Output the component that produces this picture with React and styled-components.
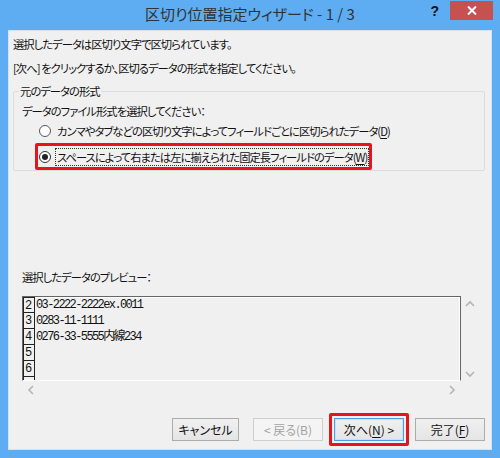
import React from 'react';
import styled, { createGlobalStyle } from 'styled-components';

const GlobalStyle = createGlobalStyle`
  html, body { margin: 0; padding: 0; background: #fff; }
  body {
    font-family: "Noto Sans CJK JP", sans-serif;
    font-feature-settings: "palt";
    color: #111;
  }
`;

const Window = styled.div`
  width: 500px;
  height: 458px;
  box-sizing: border-box;
  background: #5eadf2;
  padding: 0 8px 8px;
  display: flex;
  flex-direction: column;
`;

const TitleBar = styled.div`
  height: 30px;
  flex: none;
  display: grid;
  grid-template-columns: 1fr auto 1fr;
`;

const Title = styled.div`
  grid-column: 2;
  padding-top: 4px;
  line-height: 20px;
  font-size: 15px;
  color: #333;
  white-space: nowrap;
`;

const Controls = styled.div`
  grid-column: 3;
  justify-self: end;
  display: flex;
  align-items: flex-start;
  margin-right: -1px;
`;

const Help = styled.div`
  font-family: "Liberation Sans", sans-serif;
  font-weight: bold;
  font-size: 14px;
  line-height: 14px;
  color: #111;
  margin: 4px 11px 0 0;
`;

const Close = styled.div`
  width: 43px;
  height: 19px;
  margin-top: 1px;
  background: #c75050;
  display: flex;
  align-items: center;
  justify-content: center;
`;

const Body = styled.div`
  flex: 1;
  background: #f0f0f0;
  border: 1px solid #d6e2ee;
  padding: 3px 6px 3px 4px;
  display: flex;
  flex-direction: column;
  font-size: 11.3px;
  letter-spacing: -0.95px;
`;

const Line = styled.div`
  line-height: 20px;
  margin-top: ${p => p.$gap || 0}px;
  margin-left: ${p => p.$indent || 0}px;
  white-space: nowrap;
`;

const Group = styled.fieldset`
  margin: 5px 0 0;
  padding: 0 0 0 8px;
  border: 1px solid #dcdcdc;
  border-radius: 2px;
  display: flex;
  flex-direction: column;
  align-items: flex-start;
  min-width: 0;
`;

const Legend = styled.legend`
  padding: 0 1px;
  margin-left: -3px;
  line-height: 16px;
`;

const RadioRow = styled.label`
  display: flex;
  align-items: center;
  height: ${p => p.$h || 20}px;
  padding-left: ${p => p.$pad || 0}px;
  white-space: nowrap;
`;

const RadioCircle = styled.span`
  width: 12px;
  height: 12px;
  box-sizing: border-box;
  border-radius: 50%;
  border: 1px solid ${p => (p.$checked ? '#333' : '#555')};
  background: #fff;
  margin-right: 4px;
  display: flex;
  align-items: center;
  justify-content: center;
  flex: none;

  &::after {
    content: '';
    width: 6px;
    height: 6px;
    border-radius: 50%;
    background: ${p => (p.$checked ? '#222' : 'transparent')};
  }
`;

const RadioText = styled.span`
  padding: 0 1px;
  line-height: 16px;
  border: 1px dotted ${p => (p.$focus ? '#333' : 'transparent')};
`;

const Key = styled.u`
  text-decoration: underline;
  text-underline-offset: 2px;
`;

const Highlight = styled.div`
  border: 3px solid #e8141b;
  border-radius: 2px;
  padding: ${p => p.$pad || 0}px;
  margin: ${p => p.$margin || '0'};
  display: inline-flex;
  align-self: flex-start;
`;

const Preview = styled.div`
  margin: 9px 0 0 9px;
  width: 456px;
  height: 100px;
  display: grid;
  grid-template-columns: 1fr 17px;
  grid-template-rows: 85px 15px;
  letter-spacing: 0;
`;

const DataBox = styled.div`
  border: 1px solid #666;
  box-shadow: inset -1px 0 #fff, inset 0 1px #fff;
  border-bottom: 1px solid #fff;
  overflow: hidden;
  display: flex;
  flex-direction: column;
`;

const DataRow = styled.div`
  display: flex;
  height: 16px;
  flex: none;
`;

const RowNum = styled.div`
  width: 12px;
  box-sizing: border-box;
  border: 1px solid #222;
  border-top: ${p => (p.$first ? '1px solid #222' : 'none')};
  height: 16px;
  font-family: "Liberation Mono", monospace;
  font-size: 12px;
  line-height: 14px;
  padding: 1px 0 0 1px;
  color: #111;
`;

const Cell = styled.div`
  padding-left: 1px;
  font-family: "Liberation Mono", "Noto Sans CJK JP", monospace;
  font-size: 12px;
  letter-spacing: -1.6px;
  line-height: 16px;
  white-space: nowrap;
  color: #111;
`;

const VScroll = styled.div`
  display: flex;
  flex-direction: column;
  justify-content: space-between;
  align-items: center;
  padding: 4px 0 3px;
`;

const HScroll = styled.div`
  display: flex;
  justify-content: space-between;
  align-items: center;
  padding: 3px 5px 0;
`;

const ButtonRow = styled.div`
  margin-top: auto;
  display: flex;
  justify-content: flex-end;
  align-items: center;
  gap: 6px;
  letter-spacing: 0;
`;

const Button = styled.button`
  width: ${p => p.$w || 70}px;
  height: 23px;
  box-sizing: border-box;
  margin: 0 ${p => p.$after || 0}px 0 0;
  padding: 0;
  font-family: "Noto Sans CJK JP", sans-serif;
  font-feature-settings: "palt";
  font-size: 12px;
  color: ${p => (p.disabled ? '#a3a3a3' : '#111')};
  border: 1px solid ${p => (p.disabled ? '#cfcfcf' : p.$default ? '#4f9be6' : '#acacac')};
  background: ${p => (p.disabled ? '#f4f4f4' : 'linear-gradient(#f0f0f0, #e5e5e5)')};
  box-shadow: ${p => (p.$default ? 'inset 0 0 0 1px #c8e0f7' : 'none')};
`;

const Chevron = ({ dir }) => {
  const paths = {
    up: 'M1 6 L5 2 L9 6',
    down: 'M1 2 L5 6 L9 2',
    left: 'M6 1 L2 5 L6 9',
    right: 'M2 1 L6 5 L2 9',
  };
  const vertical = dir === 'up' || dir === 'down';
  return (
    <svg width={vertical ? 10 : 8} height={vertical ? 8 : 10} viewBox={vertical ? '0 0 10 8' : '0 0 8 10'}>
      <path d={paths[dir]} fill="none" stroke="#b4b4b4" strokeWidth="1.6" />
    </svg>
  );
};

const rows = [
  { id: 2, n: '2', text: '03-2222-2222ex.0011' },
  { id: 3, n: '3', text: '0283-11-1111' },
  { id: 4, n: '4', text: '0276-33-5555内線234' },
  { id: 5, n: '5', text: '' },
  { id: 6, n: '6', text: '' },
  { id: 7, n: '', text: '' },
];

export default function App() {
  return (
    <>
      <GlobalStyle />
      <Window>
        <TitleBar>
          <Title>区切り位置指定ウィザード - 1 / 3</Title>
          <Controls>
            <Help>?</Help>
            <Close>
              <svg width="10" height="9" viewBox="0 0 10 9">
                <path d="M1 0.5 L9 8.5 M9 0.5 L1 8.5" stroke="#fff" strokeWidth="2" />
              </svg>
            </Close>
          </Controls>
        </TitleBar>
        <Body>
          <Line>選択したデータは区切り文字で区切られています。</Line>
          <Line $gap={4}>[次へ] をクリックするか、区切るデータの形式を指定してください。</Line>
          <Group>
            <Legend>元のデータの形式</Legend>
            <Line $gap={2}>データのファイル形式を選択してください：</Line>
            <RadioRow $pad={17}>
              <RadioCircle />
              <RadioText>
                カンマやタブなどの区切り文字によってフィールドごとに区切られたデータ(<Key>D</Key>)
              </RadioText>
            </RadioRow>
            <Highlight $margin="2px 0 0 13px">
              <RadioRow $h={21} $pad={1}>
                <RadioCircle $checked />
                <RadioText $focus>
                  スペースによって右または左に揃えられた固定長フィールドのデータ(<Key>W</Key>)
                </RadioText>
              </RadioRow>
            </Highlight>
          </Group>
          <Line $gap={96} $indent={9}>選択したデータのプレビュー：</Line>
          <Preview>
            <DataBox>
              {rows.map((r, i) => (
                <DataRow key={r.id}>
                  <RowNum $first={i === 0}>{r.n}</RowNum>
                  <Cell>{r.text}</Cell>
                </DataRow>
              ))}
            </DataBox>
            <VScroll>
              <Chevron dir="up" />
              <Chevron dir="down" />
            </VScroll>
            <HScroll>
              <Chevron dir="left" />
              <Chevron dir="right" />
            </HScroll>
          </Preview>
          <ButtonRow>
            <Button $w={67} $after={8}>キャンセル</Button>
            <Button disabled>&lt; 戻る(B)</Button>
            <Highlight $pad={2}>
              <Button $default>次へ(<Key>N</Key>) &gt;</Button>
            </Highlight>
            <Button>完了(<Key>F</Key>)</Button>
          </ButtonRow>
        </Body>
      </Window>
    </>
  );
}
